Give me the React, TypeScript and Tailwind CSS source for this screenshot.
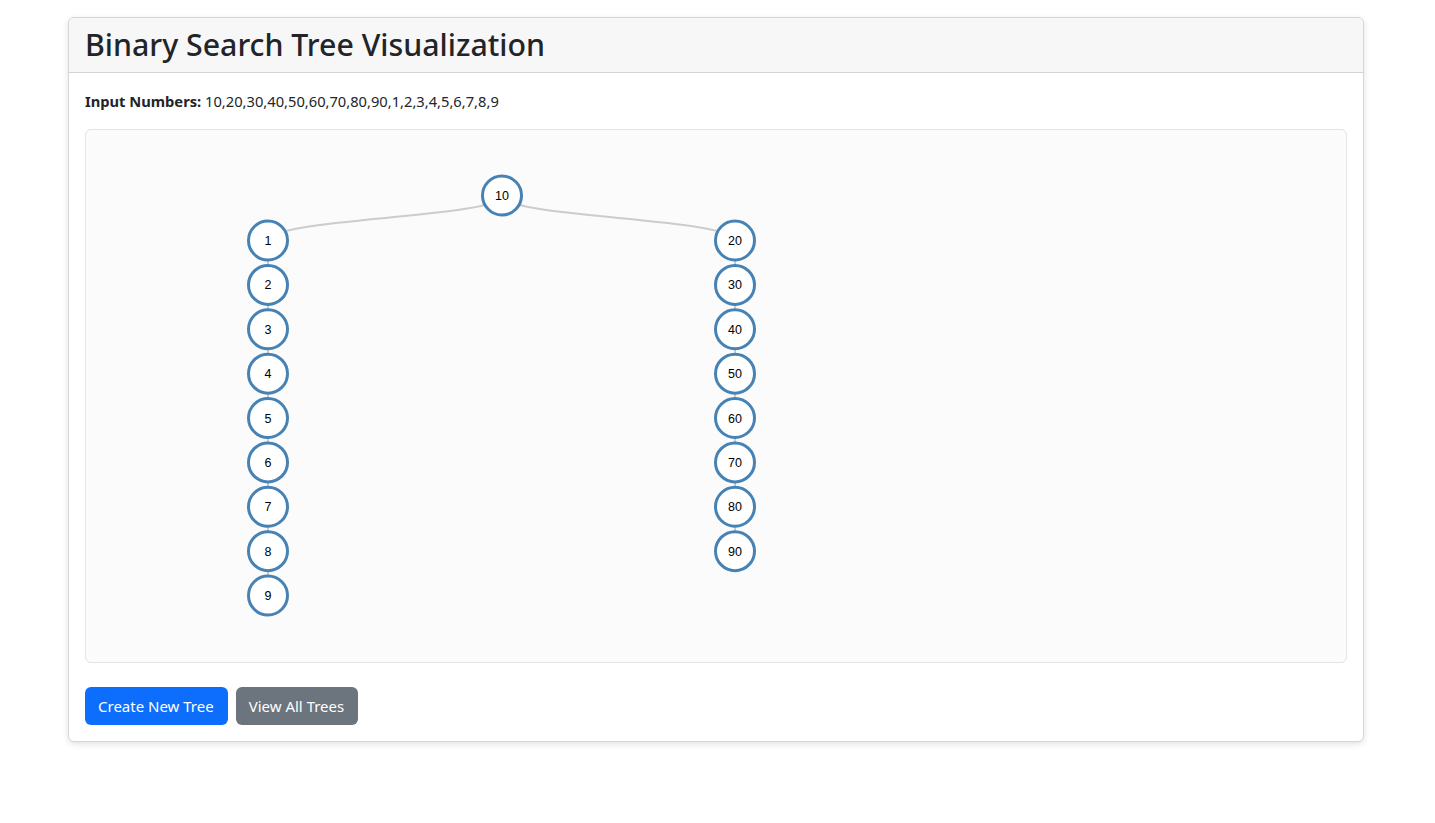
import React from 'react'

type Pt = { label: string; x: number; y: number }

const STEP = 44.375
const ROOT: Pt = { label: '10', x: 416, y: 65.5 }
const LEFT: Pt[] = [1, 2, 3, 4, 5, 6, 7, 8, 9].map((n, i) => ({ label: String(n), x: 182, y: 110.5 + i * STEP }))
const RIGHT: Pt[] = [20, 30, 40, 50, 60, 70, 80, 90].map((n, i) => ({ label: String(n), x: 649, y: 110.5 + i * STEP }))

// parent -> child pairs, same as a d3 tree would give
const LINKS: [Pt, Pt][] = [
  [ROOT, LEFT[0]],
  [ROOT, RIGHT[0]],
  ...LEFT.slice(1).map((p, i) => [LEFT[i], p] as [Pt, Pt]),
  ...RIGHT.slice(1).map((p, i) => [RIGHT[i], p] as [Pt, Pt]),
]

function linkPath(s: Pt, t: Pt) {
  const my = (s.y + t.y) / 2
  return `M${s.x},${s.y}C${s.x},${my} ${t.x},${my} ${t.x},${t.y}`
}

function TreeCanvas() {
  const nodes = [ROOT, ...LEFT, ...RIGHT]
  return (
    <svg width="100%" height="532" className="block">
      {LINKS.map(([s, t], i) => (
        <path key={i} d={linkPath(s, t)} fill="none" stroke="#cccccc" strokeWidth={2} />
      ))}
      {nodes.map(n => (
        <g key={n.label} transform={`translate(${n.x},${n.y})`}>
          <circle r={19.5} fill="#ffffff" stroke="#4682b4" strokeWidth={3} />
          <text dy="0.36em" textAnchor="middle" fontSize={12.5} fill="#000"
            style={{ fontFamily: '"Liberation Sans", Arial, sans-serif' }}>
            {n.label}
          </text>
        </g>
      ))}
    </svg>
  )
}

export default function App() {
  return (
    <div className="min-h-screen bg-white text-[#212529] font-['Noto_Sans',sans-serif]">
      <div className="ml-[68px] w-[1296px] pt-[17px]">
        <div className="bg-white border border-[#d6d6d7] rounded-md shadow-[0_2px_6px_rgba(0,0,0,0.12)]">
          <div className="bg-[#f7f7f7] border-b border-[#d3d3d4] rounded-t-md px-4 py-2">
            <h2 className="text-[30.3px] leading-[38px] font-medium text-[#212529]">Binary Search Tree Visualization</h2>
          </div>
          <div className="p-4">
            <p className="text-[14.7px] leading-6 mb-4">
              <strong className="font-bold">Input Numbers:</strong> 10,20,30,40,50,60,70,80,90,1,2,3,4,5,6,7,8,9
            </p>
            <div className="border border-[#e2e3e5] rounded-md bg-[#fbfbfb] mb-6">
              <TreeCanvas />
            </div>
            <div className="flex gap-2">
              <button className="bg-[#0d6efd] text-white text-[15px] leading-6 pl-[13px] pr-[14px] py-[7px] rounded-md">Create New Tree</button>
              <button className="bg-[#6c757d] text-white text-[15px] leading-6 pl-[13px] pr-[14px] py-[7px] rounded-md">View All Trees</button>
            </div>
          </div>
        </div>
      </div>
    </div>
  )
}
